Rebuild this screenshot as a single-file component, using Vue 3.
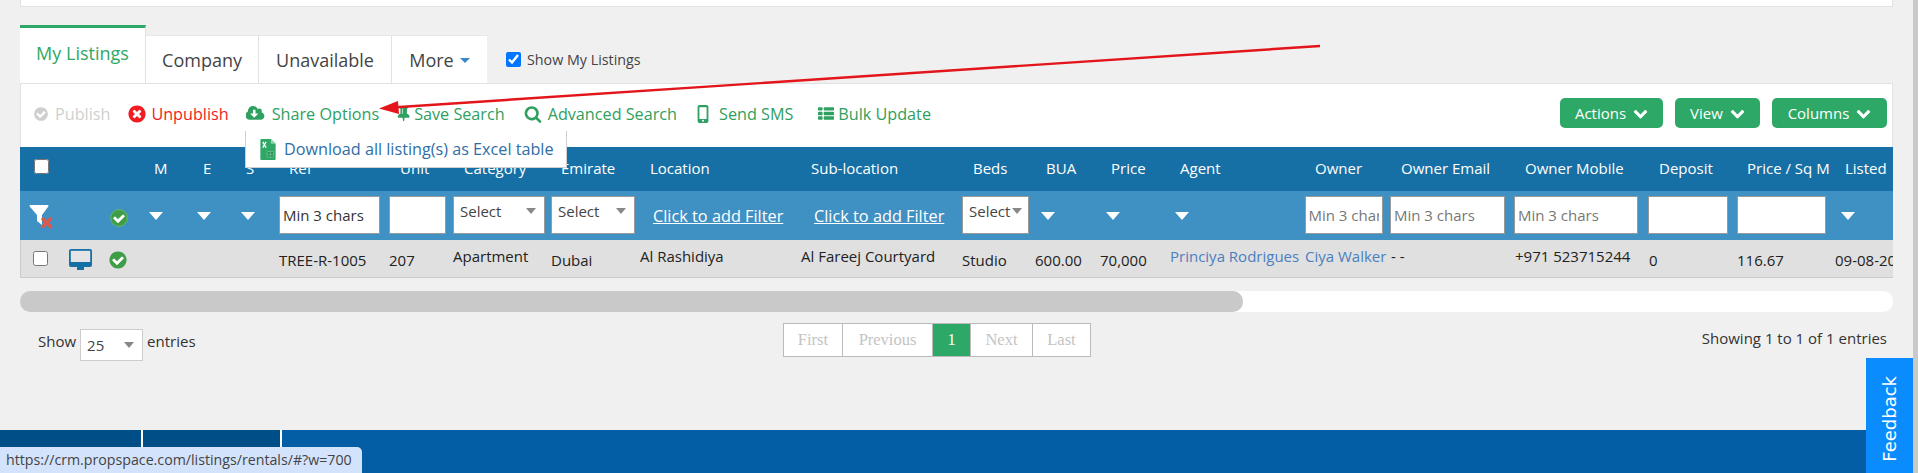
<script setup>
const icons = {
  check: { v: '0 0 1792 1792', d: 'M1412 734q0-28-18-46l-91-90q-19-19-45-19t-45 19l-408 407-226-226q-19-19-45-19t-45 19l-91 90q-18 18-18 46 0 27 18 45l362 362q19 19 45 19 27 0 46-19l543-543q18-18 18-45zm252 162q0 209-103 385.5t-279.5 279.5-385.5 103-385.5-103-279.5-279.5-103-385.5 103-385.5 279.5-279.5 385.5-103 385.5 103 279.5 279.5 103 385.5z' },
  times: { v: '0 0 1792 1792', d: 'M1277 1122q0-26-19-45l-181-181 181-181q19-19 19-45 0-27-19-46l-90-90q-19-19-46-19-26 0-45 19l-181 181-181-181q-19-19-45-19-27 0-46 19l-90 90q-19 19-19 46 0 26 19 45l181 181-181 181q-19 19-19 45 0 27 19 46l90 90q19 19 46 19 26 0 45-19l181-181 181 181q19 19 45 19 27 0 46-19l90-90q19-19 19-46zm387-226q0 209-103 385.5t-279.5 279.5-385.5 103-385.5-103-279.5-279.5-103-385.5 103-385.5 279.5-279.5 385.5-103 385.5 103 279.5 279.5 103 385.5z' },
  cloud: { v: '0 0 1920 1792', d: 'M1216 928q0-14-9-23t-23-9h-224v-352q0-13-9.5-22.5t-22.5-9.5h-192q-13 0-22.5 9.5t-9.5 22.5v352h-224q-13 0-22.5 9.5t-9.5 22.5q0 14 9 23l352 352q9 9 23 9t23-9l351-352q10-12 10-24zm640 224q0 159-112.5 271.5t-271.5 112.5h-1088q-185 0-316.5-131.5t-131.5-316.5q0-130 70-240t188-165q-2-30-2-43 0-212 150-362t362-150q156 0 285.5 87t188.5 231q71-62 166-62 106 0 181 75t75 181q0 76-41 138 130 31 213.5 135.5t83.5 238.5z' },
  pin: { v: '288 128 1184 1472', d: 'M800 864v-448q0-14-9-23t-23-9-23 9-9 23v448q0 14 9 23t23 9 23-9 9-23zm672 352q0 26-19 45t-45 19h-429l-51 483q-2 12-10.5 20.5t-20.5 8.5h-1q-27 0-32-27l-76-485h-404q-26 0-45-19t-19-45q0-123 78.5-221.5t177.5-98.5v-512q-52 0-90-38t-38-90 38-90 90-38h640q52 0 90 38t38 90-38 90-90 38v512q99 0 177.5 98.5t78.5 221.5z' },
  search: { v: '0 0 1792 1792', d: 'M1216 832q0-185-131.5-316.5t-316.5-131.5-316.5 131.5-131.5 316.5 131.5 316.5 316.5 131.5 316.5-131.5 131.5-316.5zm512 832q0 52-38 90t-90 38q-54 0-90-38l-343-342q-179 124-399 124-143 0-273.5-55.5t-225-150-150-225-55.5-273.5 55.5-273.5 150-225 225-150 273.5-55.5 273.5 55.5 225 150 150 225 55.5 273.5q0 220-124 399l343 343q37 37 37 90z' },
  mobile: { v: '0 0 12 20', d: 'M2 0h8a2 2 0 0 1 2 2v16a2 2 0 0 1-2 2H2a2 2 0 0 1-2-2V2a2 2 0 0 1 2-2zm0 2.5v13h8v-13zM6 16.4a1.1 1.1 0 1 0 0 2.2 1.1 1.1 0 0 0 0-2.2z' },
  list: { v: '0 128 1792 1536', d: 'M512 1248v192q0 40-28 68t-68 28h-320q-40 0-68-28t-28-68v-192q0-40 28-68t68-28h320q40 0 68 28t28 68zm0-512v192q0 40-28 68t-68 28h-320q-40 0-68-28t-28-68v-192q0-40 28-68t68-28h320q40 0 68 28t28 68zm1280 512v192q0 40-28 68t-68 28h-960q-40 0-68-28t-28-68v-192q0-40 28-68t68-28h960q40 0 68 28t28 68zm-1280-1024v192q0 40-28 68t-68 28h-320q-40 0-68-28t-28-68v-192q0-40 28-68t68-28h320q40 0 68 28t28 68zm1280 512v192q0 40-28 68t-68 28h-960q-40 0-68-28t-28-68v-192q0-40 28-68t68-28h960q40 0 68 28t28 68zm0-512v192q0 40-28 68t-68 28h-960q-40 0-68-28t-28-68v-192q0-40 28-68t68-28h960q40 0 68 28t28 68z' },
  chevron: { v: '0 200 1792 1400', d: 'M1683 808l-742 741q-19 19-45 19t-45-19l-742-741q-19-19-19-45.5t19-45.5l166-165q19-19 45-19t45 19l531 531 531-531q19-19 45-19t45 19l166 165q19 19 19 45.5t-19 45.5z' }
}

const actions = [
  { key: 'pub', icon: 'check', label: 'Publish', tone: 'muted', size: 16, gap: 6 },
  { key: 'unp', icon: 'times', label: 'Unpublish', tone: 'red', size: 20, gap: 4 },
  { key: 'share', icon: 'cloud', label: 'Share Options', tone: 'green', size: 19, gap: 7 },
  { key: 'save', icon: 'pin', label: 'Save Search', tone: 'green', size: 15, gap: 3 },
  { key: 'adv', icon: 'search', label: 'Advanced Search', tone: 'green', size: 18, gap: 6, ml: 2 },
  { key: 'sms', icon: 'mobile', label: 'Send SMS', tone: 'green', size: 18, gap: 7 },
  { key: 'bulk', icon: 'list', label: 'Bulk Update', tone: 'green', size: 16, gap: 4, ml: 8 }
]

const buttons = [
  { label: 'Actions', w: 103 },
  { label: 'View', w: 85 },
  { label: 'Columns', w: 115 }
]

const columns = [
  { w: 44, h: '', hp: 14, fp: 9, fk: 'funnel', dk: 'box', dp: 13 },
  { w: 36, dk: 'screen', dp: 4 },
  { w: 40, fk: 'ok', fp: 9, dk: 'ok', dp: 8 },
  { w: 48, h: 'M', hp: 14, fk: 'arrow', fp: 9 },
  { w: 40, h: 'E', hp: 15, fk: 'arrow', fp: 9 },
  { w: 44, h: 'S', hp: 18, fk: 'arrow', fp: 13 },
  { w: 112, h: 'Ref', hp: 17, fk: 'input', fp: 7, fw: 101, ph: 'Min 3 chars', dark: true, d: 'TREE-R-1005', dp: 7 },
  { w: 65, h: 'Unit', hp: 16, fk: 'input', fp: 5, fw: 57, d: '207', dp: 5 },
  { w: 98, h: 'Category', hp: 15, fk: 'select', fp: 4, fw: 92, sel: 'Select', d: 'Apartment', dp: 4, up: true },
  { w: 93, h: 'Emirate', hp: 14, fk: 'select', fp: 4, fw: 84, sel: 'Select', d: 'Dubai', dp: 4 },
  { w: 160, h: 'Location', hp: 10, fk: 'link', fp: 13, d: 'Al Rashidiya', dp: 0, up: true },
  { w: 158, h: 'Sub-location', hp: 11, fk: 'link', fp: 14, d: 'Al Fareej Courtyard', dp: 1, up: true },
  { w: 72, h: 'Beds', hp: 15, fk: 'select', fp: 4, fw: 67, sel: 'Select', tight: true, d: 'Studio', dp: 4 },
  { w: 68, h: 'BUA', hp: 16, fk: 'arrow', fp: 11, d: '600.00', dp: 5 },
  { w: 66, h: 'Price', hp: 13, fk: 'arrow', fp: 8, d: '70,000', dp: 2 },
  { w: 139, h: 'Agent', hp: 16, fk: 'arrow', fp: 11, d: 'Princiya Rodrigues', dp: 6, up: true, link: true },
  { w: 85, h: 'Owner', hp: 12, fk: 'input', fp: 1.5, fw: 78, ph: 'Min 3 chars', d: 'Ciya Walker', dp: 2, up: true, link: true },
  { w: 123, h: 'Owner Email', hp: 13, fk: 'input', fp: 2, fw: 115, ph: 'Min 3 chars', d: '- -', dp: 3, up: true },
  { w: 135, h: 'Owner Mobile', hp: 14, fk: 'input', fp: 3, fw: 124, ph: 'Min 3 chars', d: '+971 523715244', dp: 4, up: true },
  { w: 89, h: 'Deposit', hp: 13, fk: 'input', fp: 2, fw: 80, d: '0', dp: 3 },
  { w: 98, h: 'Price / Sq M', hp: 12, fk: 'input', fp: 2, fw: 89, d: '116.67', dp: 2 },
  { w: 60, h: 'Listed', hp: 12, fk: 'arrow', fp: 8, d: '09-08-2021', dp: 2 }
]

const pages = [
  { label: 'First', w: 59 },
  { label: 'Previous', w: 90 },
  { label: '1', w: 38, active: true },
  { label: 'Next', w: 62 },
  { label: 'Last', w: 57 }
]
</script>

<template>
  <div class="shell">
    <div class="main">
      <div class="content">
        <div class="topbox"></div>

        <div class="tabs">
          <div class="tab tab-active">My Listings</div>
          <div class="tab tab-company">Company</div>
          <div class="tab tab-unavail">Unavailable</div>
          <div class="tab tab-more">More <span class="caret"></span></div>
          <label class="show-mine"><input type="checkbox" checked class="cb" /> Show My Listings</label>
        </div>

        <div class="toolbar">
          <div class="actions">
            <div v-for="a in actions" :key="a.key" class="action" :class="a.tone" :style="{ gap: a.gap + 'px', marginLeft: (a.ml || 0) + 'px' }">
              <svg :viewBox="icons[a.icon].v" :height="a.size" :width="a.size" class="ic"><path :d="icons[a.icon].d" fill="currentColor" /></svg>
              <span>{{ a.label }}</span>
            </div>
          </div>
          <div class="btns">
            <div v-for="b in buttons" :key="b.label" class="btn" :style="{ width: b.w + 'px' }">
              {{ b.label }}
              <svg :viewBox="icons.chevron.v" width="15" height="12"><path :d="icons.chevron.d" fill="#fff" /></svg>
            </div>
          </div>
          <div class="menu">
            <svg class="xls" viewBox="0 0 16 22" width="16" height="21">
              <path d="M1 0h10l5 5v16a1 1 0 0 1-1 1H1a1 1 0 0 1-1-1V1a1 1 0 0 1 1-1z" fill="#2fa866" />
              <path d="M11 0l5 5h-5z" fill="#8fd6ac" />
              <path d="M7 13h7v6H7z M7 16h7 M10.500 13v6" fill="#259257" stroke="#6cc595" stroke-width=".8" />
              <path d="M2.500 3l3.500 6M6 3L2.500 9" stroke="#fff" stroke-width="1.300" fill="none" />
            </svg>
            <span>Download all listing(s) as Excel table</span>
          </div>
        </div>

        <div class="table">
          <div class="row row-head">
            <div v-for="(c, i) in columns" :key="i" class="cell" :style="{ width: c.w + 'px', paddingLeft: (c.hp || 0) + 'px' }">
              <input v-if="i === 0" type="checkbox" class="cb cb-box" />
              <template v-else>{{ c.h }}</template>
            </div>
          </div>
          <div class="row row-filter">
            <div v-for="(c, i) in columns" :key="i" class="cell" :style="{ width: c.w + 'px', paddingLeft: (c.fp || 0) + 'px' }">
              <svg v-if="c.fk === 'funnel'" class="funnel" viewBox="0 0 24 26" width="24" height="26">
                <path d="M1.500 1h17a1 1 0 0 1 .8 1.600L13 11v10l-5-4v-6L.7 2.600A1 1 0 0 1 1.500 1z" fill="#fff" />
                <path d="M13 14l9.500 9.500M22.500 14L13 23.500" stroke="#db5a4b" stroke-width="3.400" />
              </svg>
              <svg v-else-if="c.fk === 'ok'" :viewBox="icons.check.v" width="20" height="20" class="ok-f"><circle cx="896" cy="896" r="640" fill="#fff" /><path :d="icons.check.d" fill="#3f9d47" /><circle cx="896" cy="896" r="750" fill="none" stroke="#6cbf6f" stroke-width="70" /></svg>
              <span v-else-if="c.fk === 'arrow'" class="wedge"></span>
              <div v-else-if="c.fk === 'input'" class="field" :class="{ dark: c.dark }" :style="{ width: c.fw + 'px' }"><span class="ph">{{ c.ph }}</span></div>
              <div v-else-if="c.fk === 'select'" class="field fsel" :class="{ tight: c.tight }" :style="{ width: c.fw + 'px' }">
                <span>{{ c.sel }}</span><i class="tri"></i>
              </div>
              <span v-else-if="c.fk === 'link'" class="addf">Click to add Filter</span>
            </div>
          </div>
          <div class="row row-data">
            <div v-for="(c, i) in columns" :key="i" class="cell" :class="{ up: c.up, link: c.link }" :style="{ width: c.w + 'px', paddingLeft: (c.dp || 0) + 'px' }">
              <input v-if="c.dk === 'box'" type="checkbox" class="cb cb-box" />
              <svg v-else-if="c.dk === 'screen'" viewBox="0 0 25 23" width="25" height="23">
                <path d="M3 1h19a2 2 0 0 1 2 2v14a2 2 0 0 1-2 2h-6v3H9v-3H3a2 2 0 0 1-2-2V3a2 2 0 0 1 2-2z" fill="#1770a5" />
                <path d="M2.800 2.800h19.400v11.200H2.800z" fill="#e4e4e4" />
              </svg>
              <svg v-else-if="c.dk === 'ok'" :viewBox="icons.check.v" width="20" height="20" class="ok-d"><circle cx="896" cy="896" r="640" fill="#fff" /><path :d="icons.check.d" fill="#3f9d47" /></svg>
              <template v-else>{{ c.d }}</template>
            </div>
          </div>
        </div>

        <div class="track"><div class="thumb"></div></div>

        <div class="foot">
          <div class="foot-left">
            <span>Show</span>
            <div class="length"><span>25</span><i class="tri"></i></div>
            <span>entries</span>
          </div>
          <div class="pager">
            <div v-for="p in pages" :key="p.label" class="page" :class="{ on: p.active }" :style="{ width: p.w + 'px' }">{{ p.label }}</div>
          </div>
          <div class="foot-right">Showing 1 to 1 of 1 entries</div>
        </div>
      </div>

      <div class="footer">
        <div class="seg seg-a"></div>
        <div class="seg seg-b"></div>
      </div>
    </div>
    <div class="scrollbar"></div>

    <svg class="arrow" width="1330" height="120" viewBox="0 0 1330 120">
      <path d="M1320 46L392 107.500" stroke="#e3151b" stroke-width="2.400" fill="none" />
      <path d="M379 108.500l19-7.500 1 13z" fill="#e3151b" />
    </svg>
    <div class="status">https://crm.propspace.com/listings/rentals/#?w=700</div>
    <div class="feedback"><span>Feedback</span></div>
  </div>
</template>

<style scoped>
.shell { position: relative; display: flex; width: 1918px; height: 473px; overflow: hidden; background: #f0f0f0; font-family: "Open Sans", sans-serif; color: #333; }
.main { flex: 1; display: flex; flex-direction: column; min-width: 0; }
.content { padding: 0 20px; }
.scrollbar { width: 5px; background: #c9c9c9; }

.topbox { height: 7px; background: #fff; border: 1px solid #e2e2e2; border-top: 0; box-sizing: border-box; }

.tabs { display: flex; align-items: flex-end; height: 58px; margin-top: 18px; }
.tab { display: flex; align-items: center; justify-content: center; height: 48px; box-sizing: border-box; background: #fff; font-size: 18px; color: #444; border-right: 1px solid #e2e2e2; border-top: 1px solid #e8e8e8; }
.tab-active { width: 126px; height: 58px; border-top: 3px solid #2ea866; color: #2ea866; padding-bottom: 6px; }
.tab-company { width: 113px; }
.tab-unavail { width: 133px; }
.tab-more { width: 95px; gap: 6px; border-right: 0; }
.caret { width: 0; height: 0; border-left: 5px solid transparent; border-right: 5px solid transparent; border-top: 5px solid #3a87c8; margin-top: 2px; }
.show-mine { display: flex; align-items: center; gap: 6px; align-self: flex-end; height: 48px; margin-left: 19px; font-size: 14.300px; color: #444; }

.cb { margin: 0; width: 15px; height: 15px; }

.toolbar { position: relative; display: flex; align-items: center; justify-content: space-between; height: 64px; box-sizing: border-box; background: #fff; border: 1px solid #e2e2e2; border-bottom: 0; padding: 0 5px 4px 12px; }
.actions { display: flex; align-items: center; gap: 17px; font-size: 16.200px; }
.action { display: flex; align-items: center; }
.muted { color: #cfcfcf; }
.red { color: #f01c22; }
.green { color: #2fa060; }
.ic { flex: none; }
.btns { display: flex; gap: 12px; margin-top: -1px; }
.btn { display: flex; align-items: center; justify-content: center; gap: 7px; height: 30px; border-radius: 5px; background: #2ea866; color: #fff; font-size: 15px; }

.menu { position: absolute; z-index: 3; left: 224px; top: 47px; display: flex; align-items: center; gap: 8px; width: 322px; height: 37px; box-sizing: border-box; padding-left: 14px; background: #fff; border: 1px solid #cfcfcf; border-top: 0; font-size: 16.200px; color: #2f6ea5; }

.table { width: 1873px; overflow: hidden; }
.row { display: flex; }
.cell { display: flex; align-items: center; flex: none; box-sizing: border-box; white-space: nowrap; overflow: hidden; }
.row-head { height: 44px; background: #1770a5; color: #fff; font-size: 15px; padding-bottom: 3px; box-sizing: border-box; }
.row-filter { height: 49px; background: #3f90c3; box-sizing: border-box; }
.row-data { height: 38px; background: #e0e0e0; border-bottom: 1px solid #cbcbcb; box-shadow: inset 1px 0 #cbcbcb; box-sizing: border-box; font-size: 15px; color: #222; padding-top: 2px; }
.row-head .cb-box { position: relative; top: -1px; }
.row-data .cb-box { position: relative; top: -1px; }
.up { padding-bottom: 8px; }
.link { color: #4a7fc0; }

.wedge { width: 0; height: 0; border-left: 7.500px solid transparent; border-right: 7.500px solid transparent; border-top: 8px solid #fff; }
.funnel { margin-top: 2px; }
.ok-f { margin-top: 4px; }
.ok-d { margin-top: 1px; }
.field { display: flex; align-items: center; height: 38px; margin-bottom: 2px; box-sizing: border-box; background: #fff; border: 1px solid #999; padding: 0 3px; font-size: 15px; color: #777; overflow: hidden; white-space: nowrap; }
.ph { overflow: hidden; }
.field.dark { color: #333; }
.fsel { justify-content: space-between; padding: 0 8px 8px 6px; color: #444; }
.fsel.tight { padding-right: 6px; }
.tri { display: block; flex: none; width: 0; height: 0; border-left: 5px solid transparent; border-right: 5px solid transparent; border-top: 6px solid #888; }
.addf { color: #fff; font-size: 16.300px; text-decoration: underline; }

.track { height: 21px; margin-top: 13px; background: #fff; border-radius: 10px; }
.thumb { width: 1223px; height: 21px; background: #c9c9c9; border-radius: 10px; }

.foot { display: flex; font-size: 15px; color: #333; margin-top: 11px; }
.foot-left { display: flex; align-items: flex-start; gap: 4px; width: 763px; box-sizing: border-box; padding: 6px 0 0 18px; }
.foot-left > span { line-height: 24px; }
.length { display: flex; align-items: center; justify-content: space-between; width: 63px; height: 32px; box-sizing: border-box; padding: 0 8px 0 6px; background: #fff; border: 1px solid #ccc; color: #444; }
.pager { display: flex; height: 34px; box-sizing: border-box; background: #fff; border: 1px solid #bbb; font-family: "Liberation Serif", serif; font-size: 16.500px; color: #c4c4c4; }
.page { display: flex; align-items: center; justify-content: center; box-sizing: border-box; border-right: 1px solid #bbb; }
.page:last-child { border-right: 0; }
.page.on { background: #2ea866; color: #fff; }
.foot-right { flex: 1; text-align: right; padding: 5px 6px 0 0; }

.footer { display: flex; margin-top: auto; height: 43px; background: #045ea5; }
.seg { height: 43px; background: #004e87; border-right: 2px solid #fff; box-sizing: border-box; }
.seg-a { width: 143px; }
.seg-b { width: 139px; }

.arrow { position: absolute; left: 0; top: 0; z-index: 4; pointer-events: none; }
.status { position: absolute; z-index: 5; left: 0; bottom: 0; width: 362px; height: 26px; box-sizing: border-box; padding-left: 6px; line-height: 26px; background: #d3e3fb; border-top-right-radius: 5px; font-size: 14.200px; color: #444; white-space: nowrap; overflow: hidden; }
.feedback { position: absolute; z-index: 5; left: 1866px; top: 358px; width: 47px; height: 115px; display: flex; align-items: flex-start; justify-content: center; background: #0a8cff; color: #fff; font-family: "DejaVu Sans", sans-serif; font-size: 18px; }
.feedback span { writing-mode: vertical-rl; transform: rotate(180deg); margin-top: 18px; line-height: 47px; }
</style>

<style>
html, body { margin: 0; overflow: hidden; background: #f0f0f0; }
</style>
